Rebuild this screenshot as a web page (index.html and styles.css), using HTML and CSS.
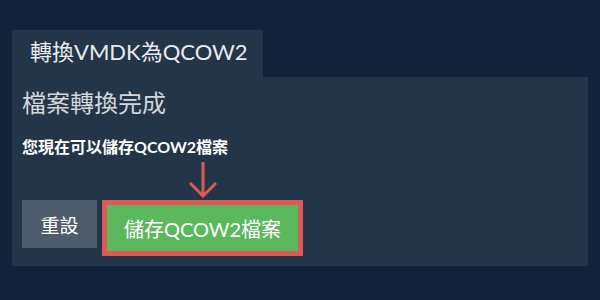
FILE: index.html
```html
<!DOCTYPE html>
<html lang="zh-Hant">
<head>
    <meta charset="UTF-8">
    <meta name="viewport" content="width=device-width, initial-scale=1.0">
    <title>轉換VMDK為QCOW2</title>
    <link rel="stylesheet" href="styles.css">
</head>
<body>
    <div class="tab">轉換VMDK為QCOW2</div>
    <div class="panel">
        <h2>檔案轉換完成</h2>
        <p class="message">您現在可以儲存QCOW2檔案</p>
        <div class="actions">
            <button class="reset-btn">重設</button>
            <div class="save-wrap">
                <!-- pointer arrow over the save button -->
                <svg class="hint-arrow" width="30" height="36" viewBox="0 0 30 36">
                    <path d="M15 0 V34 M2 21 L15 34 L28 21" fill="none" stroke="#dc5a55" stroke-width="3"/>
                </svg>
                <button class="save-btn">儲存QCOW2檔案</button>
            </div>
        </div>
    </div>
</body>
</html>
```

FILE: styles.css
```css
body {
    font-family: Lato, "Noto Sans CJK TC", sans-serif;
    background-color: #10233a;
    color: #fff;
    margin: 0;
    padding: 30px 12px 0 12px;
}

.tab {
    display: inline-block;
    background-color: #223549;
    color: #e8ecef;
    font-size: 22px;
    height: 47px;
    line-height: 44px;
    padding: 0 18px;
    box-sizing: border-box;
    width: 251px;
    white-space: nowrap;
}

.panel {
    background-color: #223549;
    padding: 10px;
    height: 189px;
    box-sizing: border-box;
}

h2 {
    font-weight: normal;
    font-size: 24px;
    color: #d3d7db;
    margin: 0;
    line-height: 32px;
}

.message {
    font-size: 16px;
    font-weight: bold;
    margin: 18px 0 0 0;
    line-height: 20px;
}

.actions {
    display: flex;
    align-items: flex-start;
    gap: 5px;
    margin-top: 43px;
}

button {
    font-family: Lato, "Noto Sans CJK TC", sans-serif;
    border: none;
    color: #fff;
    cursor: pointer;
}

.reset-btn {
    background-color: #4c5c6d;
    font-size: 19px;
    height: 48px;
    width: 75px;
}

.save-wrap {
    position: relative;
}

.hint-arrow {
    position: absolute;
    left: 50%;
    bottom: 100%;
    margin-left: -15px;
    margin-bottom: 2px;
}

.save-btn {
    background-color: #5cb85c;
    border: 5px solid #dc5a55;
    font-size: 20px;
    height: 56px;
    width: 201px;
}
```
